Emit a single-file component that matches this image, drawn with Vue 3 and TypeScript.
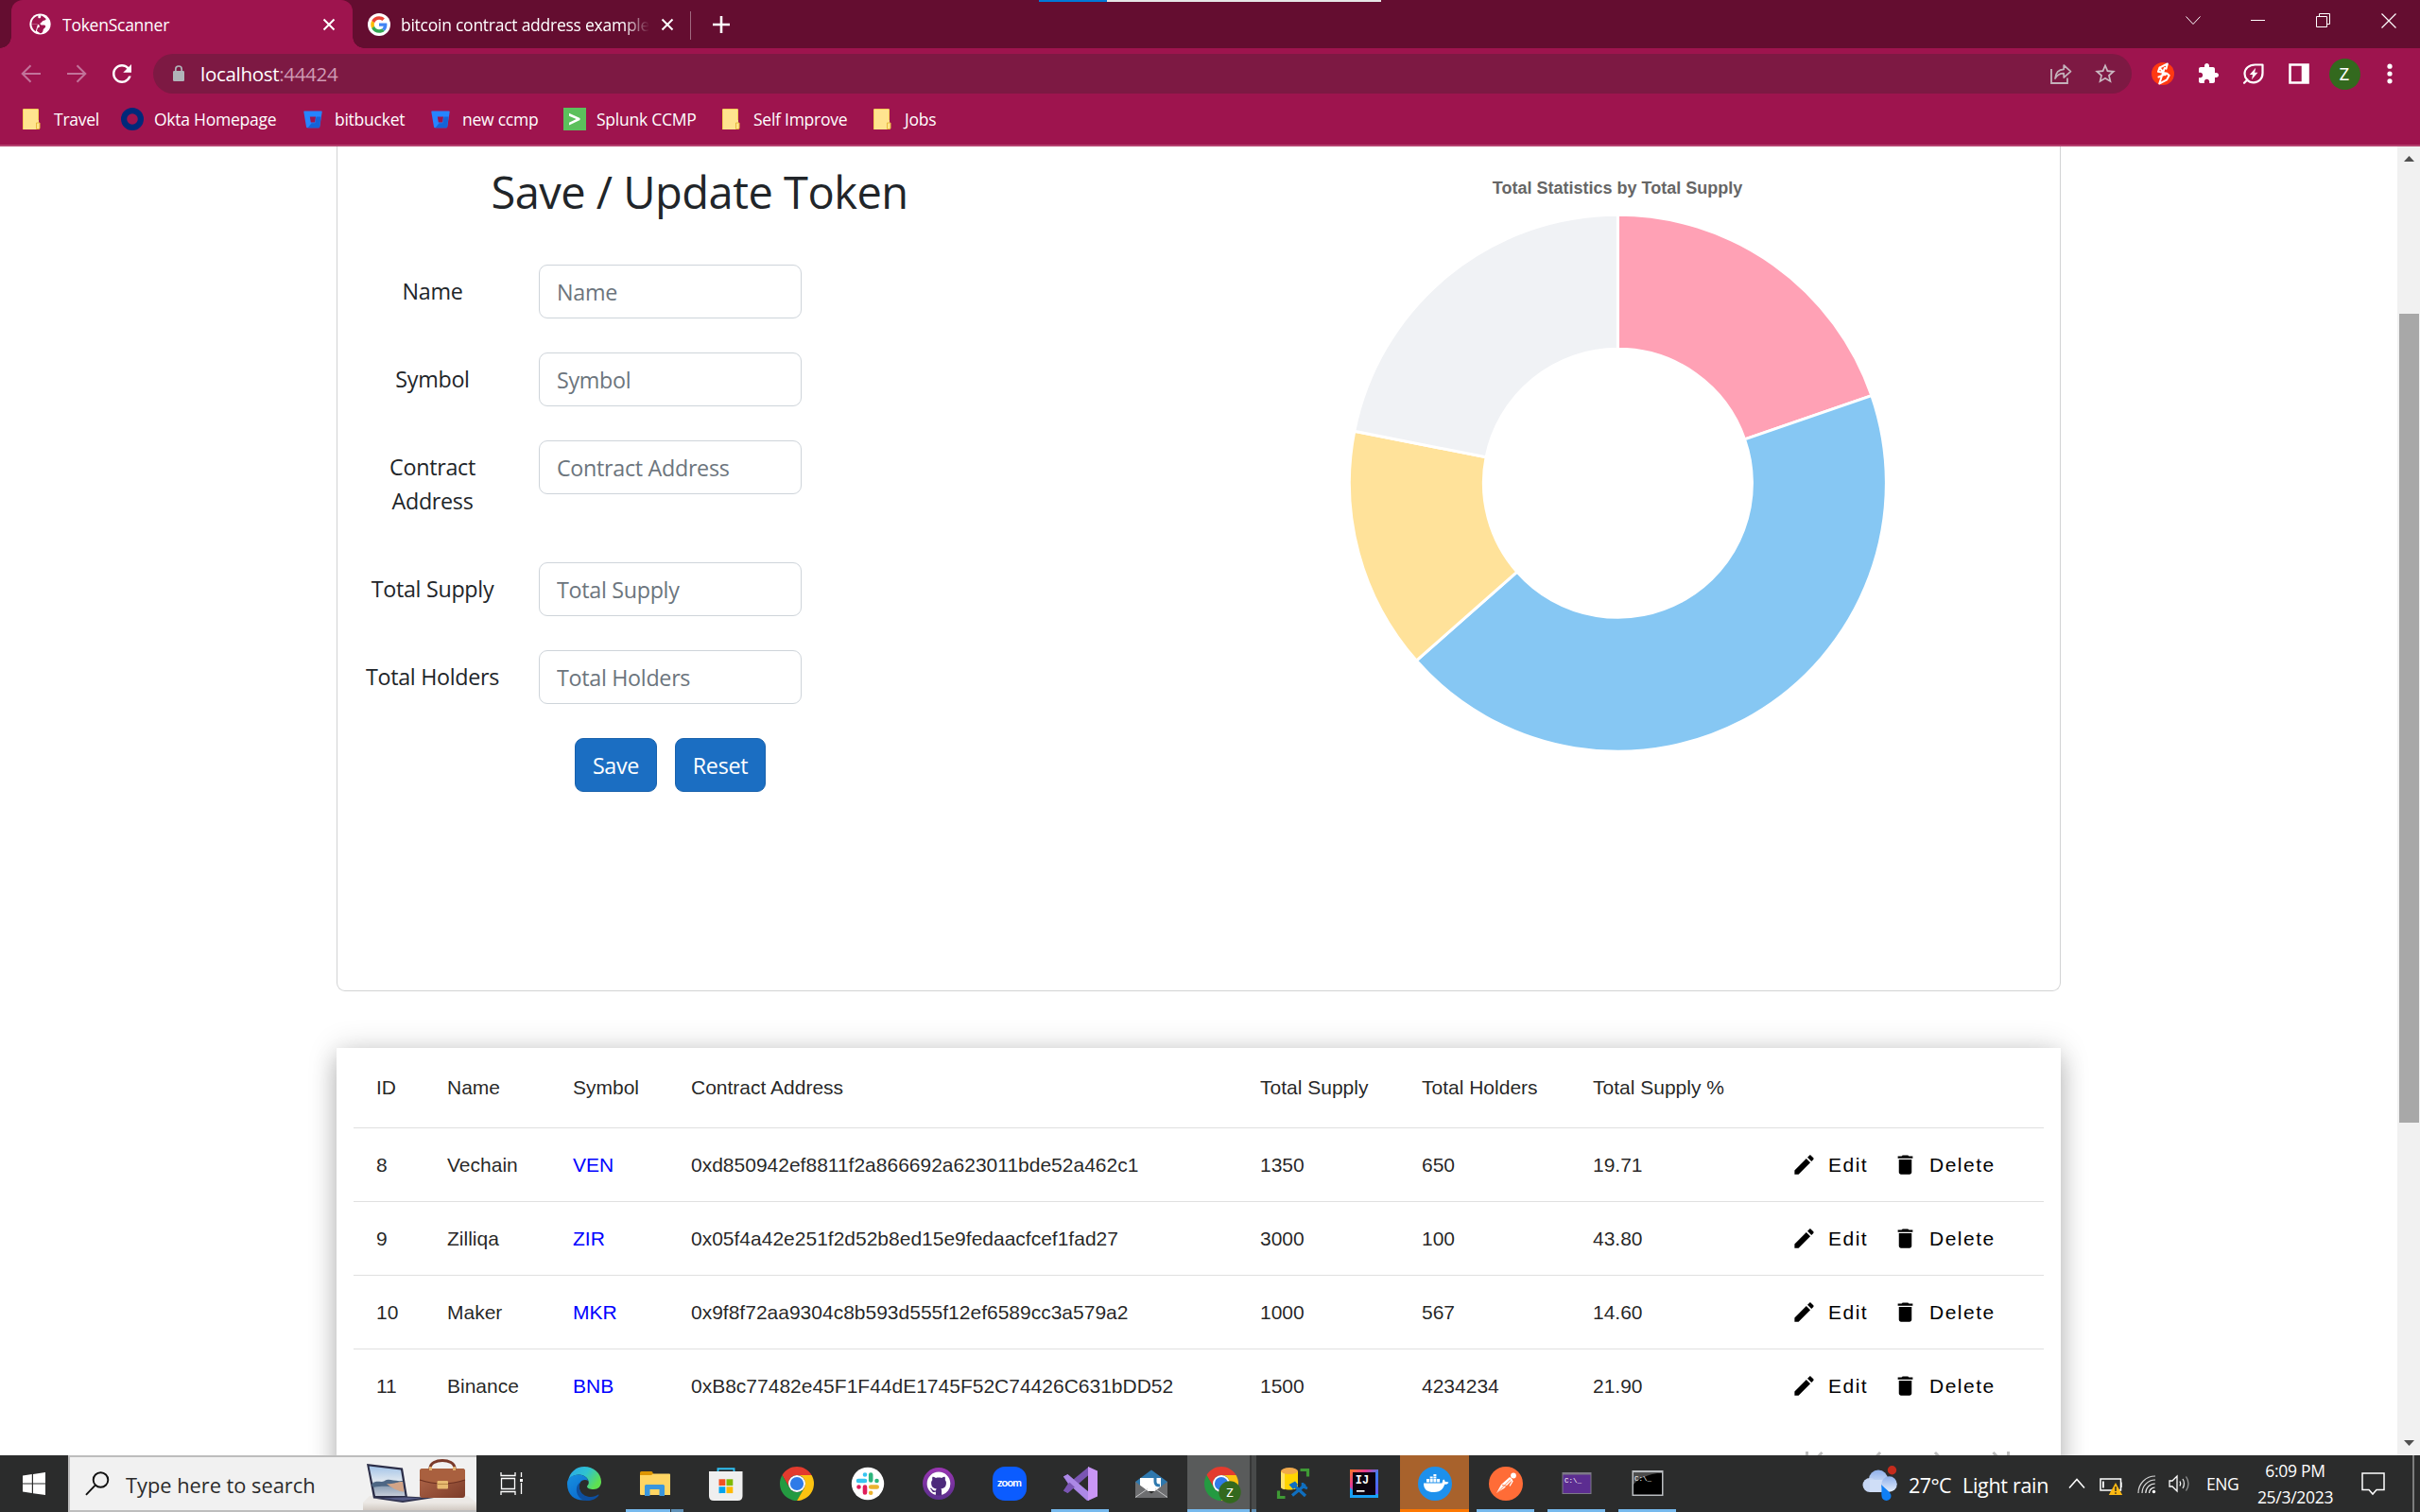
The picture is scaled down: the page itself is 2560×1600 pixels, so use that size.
<script setup lang="ts">
interface Token {
  id: number
  name: string
  symbol: string
  address: string
  supply: number
  holders: number
}

interface Field {
  label: string
  tall?: boolean
}

interface Bookmark {
  label: string
  icon: 'folder' | 'okta' | 'bucket' | 'splunk'
  width: number
}

const tokens: Token[] = [
  { id: 8, name: 'Vechain', symbol: 'VEN', address: '0xd850942ef8811f2a866692a623011bde52a462c1', supply: 1350, holders: 650 },
  { id: 9, name: 'Zilliqa', symbol: 'ZIR', address: '0x05f4a42e251f2d52b8ed15e9fedaacfcef1fad27', supply: 3000, holders: 100 },
  { id: 10, name: 'Maker', symbol: 'MKR', address: '0x9f8f72aa9304c8b593d555f12ef6589cc3a579a2', supply: 1000, holders: 567 },
  { id: 11, name: 'Binance', symbol: 'BNB', address: '0xB8c77482e45F1F44dE1745F52C74426C631bDD52', supply: 1500, holders: 4234234 },
]

const fields: Field[] = [
  { label: 'Name' },
  { label: 'Symbol' },
  { label: 'Contract Address', tall: true },
  { label: 'Total Supply' },
  { label: 'Total Holders' },
]

const headers = ['ID', 'Name', 'Symbol', 'Contract Address', 'Total Supply', 'Total Holders', 'Total Supply %', '']

const bookmarks: Bookmark[] = [
  { label: 'Travel', icon: 'folder', width: 104 },
  { label: 'Okta Homepage', icon: 'okta', width: 193 },
  { label: 'bitbucket', icon: 'bucket', width: 135 },
  { label: 'new ccmp', icon: 'bucket', width: 140 },
  { label: 'Splunk CCMP', icon: 'splunk', width: 168 },
  { label: 'Self Improve', icon: 'folder', width: 160 },
  { label: 'Jobs', icon: 'folder', width: 90 },
]

const total = tokens.reduce((sum, t) => sum + t.supply, 0)
const percents = ['19.71', '43.80', '14.60', '21.90']
const colors = ['#ffa1b5', '#86c7f3', '#ffe29a', '#f0f2f5']

const CX = 285.4
const CY = 285.3
const OUTER = 284
const INNER = 142

function point(radius: number, fraction: number): string {
  const a = fraction * Math.PI * 2 - Math.PI / 2
  return `${(CX + radius * Math.cos(a)).toFixed(2)} ${(CY + radius * Math.sin(a)).toFixed(2)}`
}

let cursor = 0
const slices = tokens.map((t, i) => {
  const from = cursor
  const to = cursor + t.supply / total
  cursor = to
  const d =
    `M${point(OUTER, from)}A${OUTER} ${OUTER} 0 0 1 ${point(OUTER, to)}` +
    `L${point(INNER, to)}A${INNER} ${INNER} 0 0 0 ${point(INNER, from)}Z`
  return { d, color: colors[i] }
})
</script>

<template>
  <div class="screen">
    <div class="progress"><span></span></div>

    <!-- tab strip -->
    <header class="tabs">
      <div class="tab active">
        <svg class="fav" viewBox="0 0 24 24">
          <circle cx="12" cy="12" r="11.6" fill="#fff" />
          <path d="M10 2.500C5.500 3.500 2.500 7.500 2.500 12h5.800c1.900 0 3 1 3 2.300 0 1.200-.8 1.700-2 1.700l-1 3.500 3.700 2.700c2 0 3.300-2 3.300-3.700 0-1 1-1.500 2-2.500 1.300-1.300.5-3-1-3h-3c-1.500 0-1.800-2-.5-2.500 1.600-.5 1.300-2.500 3.200-2.500 1.300 0 2-.6 2.500-1.700C16.500 4 14 2.700 12.500 2.500c1 1.500-.2 3-1.500 3-1.200 0-1.700-1.500-1-3z" fill="#9e144e" />
          <path d="M2.500 12h7l-2.500 8C4 18.500 2.500 15 2.500 12z" fill="#9e144e" />
        </svg>
        <span class="title t1">TokenScanner</span>
        <svg class="x" viewBox="0 0 14 14"><path d="M1.500 1.500l11 11M12.500 1.500l-11 11" stroke="#fff" stroke-width="2" /></svg>
      </div>
      <div class="tab second">
        <svg class="gfav" viewBox="0 0 48 48">
          <circle cx="24" cy="24" r="24" fill="#fff" />
          <g transform="translate(6.500 6.500) scale(.73)">
            <path fill="#EA4335" d="M24 9.500c3.540 0 6.710 1.220 9.210 3.600l6.850-6.850C35.900 2.380 30.470 0 24 0 14.620 0 6.510 5.380 2.560 13.220l7.980 6.190C12.430 13.720 17.740 9.500 24 9.500z" />
            <path fill="#4285F4" d="M46.980 24.550c0-1.570-.15-3.090-.38-4.550H24v9.020h12.940c-.58 2.960-2.260 5.480-4.780 7.180l7.730 6c4.510-4.180 7.090-10.360 7.090-17.650z" />
            <path fill="#FBBC05" d="M10.530 28.590c-.48-1.450-.76-2.990-.76-4.590s.27-3.140.76-4.590l-7.980-6.190C.92 16.460 0 20.120 0 24c0 3.880.92 7.540 2.560 10.780l7.970-6.190z" />
            <path fill="#34A853" d="M24 48c6.480 0 11.930-2.130 15.890-5.810l-7.730-6c-2.150 1.450-4.920 2.300-8.160 2.300-6.260 0-11.570-4.220-13.470-9.910l-7.980 6.190C6.510 42.620 14.620 48 24 48z" />
          </g>
        </svg>
        <span class="title t2">bitcoin contract address example</span>
        <svg class="x" viewBox="0 0 14 14"><path d="M1.500 1.500l11 11M12.500 1.500l-11 11" stroke="#fff" stroke-width="2" /></svg>
      </div>
      <i class="sep"></i>
      <svg class="plus" viewBox="0 0 18 18"><path d="M9 0v18M0 9h18" stroke="#fff" stroke-width="2.600" /></svg>
      <div class="winbtns">
        <span><svg width="16" height="16" viewBox="0 0 16 16"><path d="M.5 3.500L8 11.500l7.500-8" stroke="#fff" fill="none" /></svg></span>
        <span><svg width="16" height="16" viewBox="0 0 16 16"><path d="M0 7.500h15" stroke="#fff" /></svg></span>
        <span><svg width="16" height="16" viewBox="0 0 16 16"><path d="M.5 3.500h11v11H.5zM3.500 3.500v-3h11v11h-3" stroke="#fff" fill="none" /></svg></span>
        <span><svg width="16" height="16" viewBox="0 0 16 16"><path d="M.5 .5l15 15M15.500 .5l-15 15" stroke="#fff" stroke-width="1.200" /></svg></span>
      </div>
    </header>

    <!-- toolbar -->
    <div class="toolbar">
      <span class="cell dim"><svg width="22" height="20" viewBox="0 0 22 20"><path d="M21 10H2M10.500 1.200L1.700 10l8.800 8.800" fill="none" stroke="currentColor" stroke-width="2" /></svg></span>
      <span class="cell dim"><svg width="22" height="20" viewBox="0 0 22 20"><path d="M1 10h19M11.500 1.200l8.800 8.800-8.800 8.800" fill="none" stroke="currentColor" stroke-width="2" /></svg></span>
      <span class="cell"><svg width="30" height="30" viewBox="0 0 24 24"><path fill="#fff" d="M17.650 6.350C16.200 4.900 14.210 4 12 4c-4.420 0-7.990 3.580-7.990 8s3.570 8 7.990 8c3.730 0 6.840-2.550 7.730-6h-2.080c-.82 2.330-3.040 4-5.650 4-3.310 0-6-2.690-6-6s2.690-6 6-6c1.660 0 3.140.69 4.220 1.780L13 11h7V4l-2.350 2.350z" /></svg></span>
      <div class="address">
        <svg class="lock" width="14" height="18" viewBox="0 0 14 18"><rect x="1" y="6" width="12" height="11" rx="1.200" fill="#b0b4b9" /><path d="M3.800 7V4.200a3.200 3.200 0 0 1 6.400 0V7" fill="none" stroke="#b0b4b9" stroke-width="1.700" /></svg>
        <span class="url">localhost<em>:44424</em></span>
        <svg class="share" width="24" height="24" viewBox="0 0 24 24"><path d="M2 7v15h17v-5.500" fill="none" stroke="#c3b1ba" stroke-width="1.800" /><path d="M6 17c.6-6 4-9.400 9.200-9.600V3l7.300 6.600-7.300 6.400v-4.300C11 11.600 8.200 13.300 6 17z" fill="none" stroke="#c3b1ba" stroke-width="1.700" stroke-linejoin="round" /></svg>
        <svg class="star" width="26" height="26" viewBox="0 0 24 24"><path fill="#c9b8c0" d="M22 9.240l-7.190-.62L12 2 9.190 8.630 2 9.240l5.460 4.730L5.820 21 12 17.270 18.180 21l-1.630-7.030L22 9.240zM12 15.400l-3.760 2.270 1-4.280-3.320-2.880 4.380-.38L12 6.100l1.710 4.040 4.380.38-3.320 2.880 1 4.280L12 15.400z" /></svg>
      </div>
      <span class="cell"><svg width="24" height="24" viewBox="0 0 24 24"><circle cx="12" cy="12" r="12" fill="#ff3912" /><path d="M16.800 1.500L8.500 5.600 7 9.800l9.500 2M16.800 1.500l-1.300 5.200M16.500 11.800L7.500 15.500M13.800 6L8.200 22.500l8-4.200 2.500-4.500-2.500-2M8.500 5.600l6 7.500" stroke="#fff" stroke-width="2" fill="none" stroke-linejoin="round" stroke-linecap="round" /></svg></span>
      <span class="cell"><svg width="24" height="24" viewBox="0 0 24 24"><path fill="#fff" d="M20.500 11H19V7c0-1.100-.9-2-2-2h-4V3.500C13 2.120 11.880 1 10.500 1S8 2.120 8 3.500V5H4c-1.100 0-1.990.9-1.990 2v3.800H3.500c1.490 0 2.700 1.210 2.700 2.700s-1.210 2.700-2.700 2.700H2V20c0 1.100.9 2 2 2h3.800v-1.500c0-1.490 1.210-2.700 2.700-2.700 1.490 0 2.700 1.210 2.700 2.700V22H17c1.100 0 2-.9 2-2v-4h1.500c1.380 0 2.500-1.120 2.500-2.500S21.880 11 20.500 11z" /></svg></span>
      <span class="cell"><svg width="24" height="24" viewBox="0 0 24 24"><path d="M21.500 2.500h-8C7 2.500 2.500 6.800 2.500 12c0 2.500 1 4.700 2.600 6.400A9.500 9.500 0 0 0 12 21.300c5.500 0 9.500-4 9.500-10zM5.500 18.200L2 21.800" fill="none" stroke="#fff" stroke-width="2.200" stroke-linejoin="round" stroke-linecap="round" /><path d="M14.200 5.800L7.800 13h3.200l-1 5.200 6.400-7.400h-3.300z" fill="#fff" /></svg></span>
      <span class="cell"><svg width="22" height="22" viewBox="0 0 22 22"><path d="M1.500 1.500h19v19h-19z" fill="none" stroke="#fff" stroke-width="2.600" /><path d="M13.700 1h7v20h-7z" fill="#fff" /></svg></span>
      <span class="cell"><b class="avatar">Z</b></span>
      <span class="cell"><svg width="6" height="22" viewBox="0 0 6 22"><g fill="#fff"><circle cx="3" cy="3.200" r="2.600" /><circle cx="3" cy="11" r="2.600" /><circle cx="3" cy="18.800" r="2.600" /></g></svg></span>
    </div>

    <!-- bookmarks -->
    <nav class="bookmarks">
      <span v-for="(b, i) in bookmarks" :key="i" class="bm" :style="{ width: b.width + 'px' }">
        <svg v-if="b.icon === 'folder'" width="20" height="24" viewBox="0 0 20 24"><path d="M0 2.500Q0 1 1.500 1h14Q17 1 17 2.500V23H1.500Q0 23 0 21.500z" fill="#ffe48f" /><path d="M.5 23V2.500Q.5 1.500 1.500 1.500h14q1 0 1 1V13" fill="none" stroke="#f5cf55" /><path d="M14.500 22.500V16h3.500v5.500q0 1-1 1z" fill="#ffe48f" stroke="#e6b93c" /></svg>
        <svg v-else-if="b.icon === 'okta'" width="24" height="24" viewBox="0 0 24 24"><circle cx="12" cy="12" r="8.900" fill="none" stroke="#00297a" stroke-width="6.200" /></svg>
        <svg v-else-if="b.icon === 'bucket'" width="20" height="24" viewBox="0 0 20 24"><path d="M1 3.500h18q.8 0 .7.8l-2.500 16q-.1.900-1 .900H4q-.9 0-1-.9L.3 4.300q-.1-.8.7-.8z" fill="#2684ff" /><path d="M13.500 9.500h5l-1.300 10.800q-.1.900-1 .9H4.600l4-5h3.700z" fill="#1463d8" /><path d="M6.800 9.500h6.200l-.9 6H7.800z" fill="#9e144e" /></svg>
        <svg v-else width="24" height="24" viewBox="0 0 24 24"><path d="M0 0h24v24H0z" fill="#5cc05c" /><path d="M6 5.800l11.500 5.200v2L6 18.600v-2.900l7.600-3.600L6 8.700z" fill="#fff" /></svg>
        <span :class="'bl ' + b.icon">{{ b.label }}</span>
      </span>
    </nav>

    <!-- page -->
    <main class="viewport">
      <div class="page">
        <section class="card">
          <form class="form" @submit.prevent>
            <h2>Save / Update Token</h2>
            <div v-for="f in fields" :key="f.label" class="row" :class="{ tall: f.tall }">
              <label>{{ f.label }}</label>
              <input type="text" :placeholder="f.label" />
            </div>
            <div class="actions">
              <button type="submit" class="save">Save</button>
              <button type="reset" class="reset">Reset</button>
            </div>
          </form>
          <div class="chart">
            <div class="chart-title">Total Statistics by Total Supply</div>
            <svg width="571" height="571" viewBox="0 0 571 571">
              <path v-for="(s, i) in slices" :key="i" :d="s.d" :fill="s.color" stroke="#fff" stroke-width="3" />
            </svg>
          </div>
        </section>

        <section class="list">
          <div class="tr head">
            <span v-for="h in headers" :key="h">{{ h }}</span>
          </div>
          <div v-for="(t, i) in tokens" :key="t.id" class="tr">
            <span>{{ t.id }}</span>
            <span>{{ t.name }}</span>
            <span><a>{{ t.symbol }}</a></span>
            <span>{{ t.address }}</span>
            <span>{{ t.supply }}</span>
            <span>{{ t.holders }}</span>
            <span>{{ percents[i] }}</span>
            <span class="ops">
              <svg viewBox="0 0 24 24"><path d="M3 17.250V21h3.750L17.810 9.940l-3.750-3.750L3 17.250zM20.710 7.040c.39-.39.39-1.020 0-1.410l-2.340-2.340c-.39-.39-1.020-.39-1.410 0l-1.830 1.830 3.750 3.750 1.830-1.830z" /></svg>
              <b class="edit">Edit</b>
              <svg viewBox="0 0 24 24"><path d="M6 19c0 1.100.9 2 2 2h8c1.100 0 2-.9 2-2V7H6v12zM19 4h-3.500l-1-1h-5l-1 1H5v2h14V4z" /></svg>
              <b>Delete</b>
            </span>
          </div>
          <div class="pager">
            <svg viewBox="0 0 24 24"><path d="M18.410 16.590L13.820 12l4.590-4.590L17 6l-6 6 6 6zM6 6h2v12H6z" /></svg>
            <svg viewBox="0 0 24 24"><path d="M15.410 7.410L14 6l-6 6 6 6 1.410-1.410L10.830 12z" /></svg>
            <svg viewBox="0 0 24 24"><path d="M10 6L8.590 7.410 13.170 12l-4.580 4.590L10 18l6-6z" /></svg>
            <svg viewBox="0 0 24 24"><path d="M5.590 7.410L10.180 12l-4.590 4.590L7 18l6-6-6-6zM16 6h2v12h-2z" /></svg>
          </div>
        </section>
      </div>
      <div class="scrollbar">
        <svg width="11" height="6" viewBox="0 0 11 6"><path d="M5.500 0L11 6H0z" fill="#505050" /></svg>
        <i class="thumb"></i>
        <svg width="11" height="6" viewBox="0 0 11 6"><path d="M5.500 6L11 0H0z" fill="#505050" /></svg>
      </div>
    </main>

    <!-- taskbar -->
    <footer class="taskbar">
      <span class="start"><svg width="24" height="24" viewBox="0 0 24 24"><path d="M0 3.400l9.800-1.300v9.300H0zM11 1.900L24 0v11.400H11zM0 12.600h9.800v9.300L0 20.600zM11 12.600h13V24l-13-1.800z" fill="#fff" /></svg></span>
      <div class="search">
        <svg class="glass" width="26" height="26" viewBox="0 0 26 26"><circle cx="16.500" cy="9" r="7.800" fill="none" stroke="#111" stroke-width="1.900" /><path d="M10.800 14.700L1 24.800" stroke="#111" stroke-width="1.900" /></svg>
        <span class="stext">Type here to search</span>
        <svg class="art" width="120" height="56" viewBox="0 0 120 56">
          <defs>
            <linearGradient id="desk" x2="0" y2="1"><stop offset="0" stop-color="#ece9e5" /><stop offset="1" stop-color="#d2cac3" /></linearGradient>
            <linearGradient id="sky" x2="0" y2="1"><stop offset="0" stop-color="#a3c4e8" /><stop offset=".5" stop-color="#dfe7ef" /><stop offset=".6" stop-color="#7f96ae" /><stop offset="1" stop-color="#c6ccd8" /></linearGradient>
            <linearGradient id="bag" x2="1" y2="1"><stop offset="0" stop-color="#b46a4c" /><stop offset="1" stop-color="#7d3c29" /></linearGradient>
          </defs>
          <path d="M0 48l7-7h104l9 7z" fill="#ece9e6" />
          <path d="M0 48h120v8H0z" fill="url(#desk)" />
          <path d="M4 7l38 4.500 5 31-36 1z" fill="#2b2d47" />
          <path d="M6.500 9.500l33.500 4 4.500 27.500L13 41z" fill="url(#sky)" />
          <path d="M9 29c6-6 9-1 14-4s9 1 19 0l.8 6c-12 2-16-2-32 1z" fill="#4e6784" />
          <path d="M25 28c4 4 14 9 18.500 8.500L42 26c-7 0-9 3-17 2z" fill="#d2a487" />
          <path d="M11 43.500l35-2 29 1.500-33 5z" fill="#30334f" />
          <path d="M20 43.600l24-1 18 .7-20 2.700z" fill="#555b86" />
          <path d="M71 12C71 .5 97 .5 97 12" fill="none" stroke="#7a3a2a" stroke-width="3" />
          <rect x="60" y="12" width="48" height="31" rx="3" fill="url(#bag)" />
          <path d="M60 15q0-3 3-3h42q3 0 3 3v9q-24 8-48 0z" fill="#a9603f" />
          <path d="M60 24q24 8 48 0" fill="none" stroke="#6b3020" stroke-width="1.200" />
          <rect x="78.500" y="25" width="11.500" height="8.500" rx="1" fill="#e8ba70" />
          <path d="M78.500 28.500h11.500" stroke="#b88746" />
          <path d="M70 10h3v4h-3zM95 10h3v4h-3z" fill="#e2b071" />
        </svg>
      </div>
      <span class="taskview"><svg width="24" height="24" viewBox="0 0 24 24"><path d="M1 0v3.500h15V0M1 24v-3.500h15V24M1.500 6.500h14v11H1.500zM22.500 0v5M22.500 11v12" fill="none" stroke="#fff" stroke-width="1.300" /><path d="M21 7h3v3h-3z" fill="#fff" /></svg></span>

      <span class="slot"><svg viewBox="0 0 36 36">
        <defs>
          <linearGradient id="e1" x2="1" y2=".5"><stop offset="0" stop-color="#2aa5ea" /><stop offset=".55" stop-color="#2fc3d0" /><stop offset="1" stop-color="#5fe04f" /></linearGradient>
          <linearGradient id="e2" x2=".6" y2="1"><stop offset="0" stop-color="#1790df" /><stop offset="1" stop-color="#0b6cd0" /></linearGradient>
        </defs>
        <path d="M1 15C2.500 6 9.500 0 18 0c10 0 18 7 18 16 0 5-3.500 8-8 8-4 0-7-1.300-7-3 0-.9 1.800-1.500 1.800-4 0-4-4-8.500-10.300-8.500C6.500 8.500 2.500 11.500 1 15z" fill="url(#e1)" />
        <path d="M0 18C0 12 5.500 8.500 12 8.500c5 0 9 2.700 10.300 6.200C15 12 11.500 18 13 24c1.300 5.500 6 9.500 11 9.500C16 38.500 0 35 0 18z" fill="url(#e2)" />
        <path d="M14 16.500c-3.500 6 1 15.500 11 15.500 3 0 6-1.200 7.500-2.300.8-.5 1.300 0 .8.800C30 35 24.500 36.500 20 36 9 34.500 7 20.500 14 16.500z" fill="#0d4fa0" />
      </svg></span>
      <span class="slot"><svg viewBox="0 0 36 36">
        <path d="M2 8V6.500Q2 5 3.500 5H14q1.500 0 1.500 1.500L17 9H2z" fill="#dd9500" />
        <path d="M2 9h12l2-1.500h17q1 0 1 1V30H3q-1 0-1-1z" fill="#ffd563" />
        <path d="M7 31V20.500Q7 19 8.500 19h18q1.500 0 1.500 1.500V31h-5.500v-7h-10v7z" fill="#3a96dd" />
      </svg></span>
      <span class="slot"><svg viewBox="0 0 36 36">
        <path d="M9.500 7V2.200h17V7" fill="none" stroke="#2fc0f2" stroke-width="1.900" />
        <path d="M0 5h35.500v26q0 5-5 5H5q-5 0-5-5z" fill="#efefef" />
        <path d="M10.500 13.300h6.800v6.800h-6.800z" fill="#f25022" /><path d="M18.500 13.300h6.800v6.800h-6.800z" fill="#7fba00" /><path d="M10.500 21.300h6.800v6.800h-6.800z" fill="#00a4ef" /><path d="M18.500 21.300h6.800v6.800h-6.800z" fill="#ffb900" />
      </svg></span>
      <span class="slot"><svg viewBox="2 2 44 44">
        <path d="M24 13H43.050A22 22 0 0 0 4.950 13L14.470 29.500A11 11 0 0 1 24 13z" fill="#e33b2e" />
        <path d="M14.470 29.500L4.950 13A22 22 0 0 0 24 46l9.530-16.500A11 11 0 0 1 14.470 29.500z" fill="#249a41" />
        <path d="M43.050 13H24a11 11 0 0 1 9.530 16.500L24 46A22 22 0 0 0 43.050 13z" fill="#fcc310" />
        <circle cx="24" cy="24" r="11" fill="#fff" /><circle cx="24" cy="24" r="8.700" fill="#2f7be8" />
      </svg></span>
      <span class="slot"><svg viewBox="0 0 36 36">
        <circle cx="18" cy="18" r="17.200" fill="#fff" />
        <g stroke-width="4.600" stroke-linecap="round" fill="none">
          <path d="M15 8.500v0M15 15H8" stroke="#36c5f0" /><path d="M21.200 8.500v6" stroke="#2eb67d" /><path d="M27.500 15h0" stroke="#2eb67d" />
          <path d="M21.200 21.500h6.500M21.200 27.800v0" stroke="#ecb22e" /><path d="M15 21.500v6M8.500 21.500h0" stroke="#e01e5a" />
        </g>
      </svg></span>
      <span class="slot"><svg viewBox="0 0 36 36">
        <defs><linearGradient id="gh" x2="0" y2="1"><stop offset="0" stop-color="#9b35b3" /><stop offset="1" stop-color="#5a2f8d" /></linearGradient></defs>
        <circle cx="18" cy="18" r="17" fill="url(#gh)" />
        <circle cx="18" cy="18" r="12.400" fill="#4d2a7b" />
        <path transform="translate(5.600 5.600) scale(1.550)" fill="#fff" d="M8 0C3.580 0 0 3.580 0 8c0 3.540 2.290 6.530 5.470 7.590.4.070.55-.17.55-.38 0-.19-.01-.82-.01-1.490-2.010.37-2.530-.49-2.690-.94-.09-.23-.48-.94-.82-1.130-.28-.15-.68-.52-.01-.53.63-.01 1.080.58 1.230.82.72 1.210 1.870.87 2.330.66.07-.52.28-.87.51-1.070-1.780-.2-3.640-.89-3.640-3.950 0-.87.31-1.590.82-2.150-.08-.2-.36-1.020.08-2.120 0 0 .67-.21 2.200.82.64-.18 1.320-.27 2-.27s1.360.09 2 .27c1.530-1.040 2.200-.82 2.200-.82.44 1.100.16 1.920.08 2.120.51.56.82 1.270.82 2.150 0 3.070-1.870 3.750-3.650 3.950.29.25.54.73.54 1.480 0 1.070-.01 1.930-.01 2.200 0 .21.15.46.55.38A8.010 8.010 0 0 0 16 8c0-4.420-3.580-8-8-8z" />
      </svg></span>
      <span class="slot"><svg viewBox="0 0 36 36">
        <rect x="0" y="0" width="36" height="36" rx="13" fill="#0b5cff" />
        <text x="18" y="21.300" text-anchor="middle" font-family="Lato, sans-serif" font-weight="700" font-size="11.500" textLength="26" fill="#fff">zoom</text>
      </svg></span>
      <span class="slot vs"><svg viewBox="0 0 36 36">
        <path d="M0 10.500L4.500 8l5 4.500v11l-5 4.500L0 25.500l5-7.500z" fill="#7450a8" />
        <path d="M0 10.500l4.500-2.300L27 28.500v7.300L25 36 5 18z" fill="#a986e4" />
        <path d="M0 25.500L4.500 28 27 8.500V0L5 18z" fill="#7a55b3" />
        <path d="M0 10.500l4.500-2.300L27 27v9z" fill="#ac88e6" />
        <path d="M26 0l10 4.500v27L26 36z" fill="#c996f5" />
      </svg></span>
      <span class="slot"><svg viewBox="0 0 36 36">
        <path d="M1 16L18 3.500 35 16v5H1z" fill="#2e78ae" />
        <path d="M6 12h22v14H6z" fill="#fff" />
        <path d="M22 12v4q0 4 5 4" fill="none" stroke="#2e78ae" stroke-width="3" />
        <path d="M1 16l17 12.500L35 16v17H1z" fill="#6d6e70" />
        <path d="M1 32.500l13-9M35 32.500l-13-9" stroke="#c3c4c6" stroke-width="1" />
      </svg></span>
      <span class="slot chrome"><svg viewBox="2 2 44 44">
        <path d="M24 13H43.050A22 22 0 0 0 4.950 13L14.470 29.500A11 11 0 0 1 24 13z" fill="#e33b2e" />
        <path d="M14.470 29.500L4.950 13A22 22 0 0 0 24 46l9.530-16.500A11 11 0 0 1 14.470 29.500z" fill="#249a41" />
        <path d="M43.050 13H24a11 11 0 0 1 9.530 16.500L24 46A22 22 0 0 0 43.050 13z" fill="#fcc310" />
        <circle cx="24" cy="24" r="11" fill="#fff" /><circle cx="24" cy="24" r="8.700" fill="#2f7be8" />
        <circle cx="35" cy="35" r="14.300" fill="#33691e" />
        <text x="35" y="41" text-anchor="middle" font-family="Roboto, sans-serif" font-size="15.500" fill="#fff">Z</text>
      </svg></span>
      <span class="slot"><svg viewBox="0 0 36 36">
        <path d="M5 5v16.500c0 4 18 4 18 0V5z" fill="#ffd400" /><path d="M5 6v15.500c0 1.500 2 2.300 4 2.700V6z" fill="#ffe36a" />
        <ellipse cx="14" cy="4.600" rx="9" ry="3.500" fill="#f0a94c" />
        <path d="M25.500 3.500h8v7M9.500 32.500h-7v-7" fill="none" stroke="#3f9a35" stroke-width="3.200" />
        <path d="M17 30.500L31 19M17.500 18.500L31 31" stroke="#0f6fc0" stroke-width="3.200" />
        <path d="M13.500 19l6.500-3.500 3 3.500-5 5z" fill="#0f6fc0" /><path d="M28 17v4l5 2" stroke="#0f6fc0" stroke-width="2.600" fill="none" />
      </svg></span>
      <span class="slot"><svg viewBox="0 0 36 36">
        <defs><linearGradient id="ij" x2="1" y2="1"><stop offset="0" stop-color="#fc7a1e" /><stop offset=".3" stop-color="#e6378f" /><stop offset=".55" stop-color="#3a7df0" /><stop offset="1" stop-color="#6b4df5" /></linearGradient></defs>
        <path d="M3 3h30v30H3z" fill="url(#ij)" /><path d="M3 22l7 7h23v4H3z" fill="#17a0f5" /><path d="M6 6h24v24H6z" fill="#0c0210" />
        <text x="8.800" y="18" font-family="Liberation Mono, monospace" font-weight="700" font-size="12" fill="#fff">IJ</text>
        <path d="M10 25h8.500v1.700H10z" fill="#fff" />
      </svg></span>
      <span class="slot docker"><svg viewBox="0 0 36 36">
        <circle cx="18" cy="18" r="18" fill="#1d90ec" />
        <path d="M6 17.500h19.500c.6-1.600.4-3 1.600-4 1.200.8 1.500 1.600 1.600 2.600 1.500-.3 3 0 3.800.6-.9 1.700-2.500 2-4.300 2C26.500 25 22 27 17 27c-7 0-11-2.500-11-9.500z" fill="#fff" />
        <path d="M9 13h3v3.500H9zM12.700 13h3v3.500h-3zM16.400 13h3v3.500h-3zM20.100 13h3v3.500h-3zM12.700 10.500h3v2h-3zM16.400 10.500h3v2h-3zM16.400 8h3v2h-3z" fill="#fff" />
      </svg></span>
      <span class="slot run"><svg viewBox="0 0 36 36">
        <circle cx="18" cy="18" r="18" fill="#ff6c37" />
        <path d="M8 28l5-9 9-8 3 3-9 9z" fill="#fff" /><circle cx="26" cy="9.500" r="2.900" fill="#fff" /><path d="M9 27.500L24 12.500M14 19.500l5 1" stroke="#ff6c37" stroke-width=".9" /><path d="M22.500 12l2.500 3.500-3 5" fill="none" stroke="#fff" stroke-width="1.300" />
      </svg></span>
      <span class="slot run"><svg viewBox="0 0 36 36">
        <path d="M2.500 6h31v23h-31z" fill="#7d7a86" /><path d="M3.500 8.500h29V28h-29z" fill="#5c2d91" />
        <text x="5" y="17" font-family="Liberation Mono, monospace" font-size="7.500" fill="#fff">C:\_</text>
      </svg></span>
      <span class="slot run"><svg viewBox="0 0 36 36">
        <path d="M1.500 4h33v27h-33z" fill="#b9bcc0" /><path d="M3 6.500h30V29.500H3z" fill="#000" /><path d="M3 6.500h28C20 8 8 12 3 19z" fill="#4c4c4c" />
        <text x="4" y="14.500" font-family="Liberation Mono, monospace" font-size="7.500" fill="#fff">C:\_</text>
      </svg></span>

      <div class="tray">
        <svg class="weather" width="38" height="38" viewBox="0 0 38 38">
          <defs><linearGradient id="cl" x2="0" y2="1"><stop offset="0" stop-color="#8fb0ea" /><stop offset="1" stop-color="#e3edfb" /></linearGradient></defs>
          <circle cx="17" cy="14.500" r="10" fill="url(#cl)" /><circle cx="8" cy="20.500" r="7.500" fill="#c5d6f4" /><path d="M8 15h20v13H8z" fill="#cfdef7" /><circle cx="28.500" cy="19.500" r="8.300" fill="url(#cl)" />
          <path d="M20 20c1 6 0 8 .5 12a5 5 0 0 0 10 0C30.500 28 25 25 20 20z" fill="#0f7ff5" />
          <circle cx="31.500" cy="4.800" r="4.700" fill="#c42b1c" />
        </svg>
        <span class="temp">27°C</span>
        <span class="cond">Light rain</span>
        <svg class="chev" width="18" height="12" viewBox="0 0 18 12"><path d="M1 10.500L9 1.500l8 9" fill="none" stroke="#fff" stroke-width="1.500" /></svg>
        <svg class="batt" width="25" height="20" viewBox="0 0 25 20"><path d="M1 2h21.500v12H1zM23 5.500V11" fill="none" stroke="#fff" stroke-width="1.500" /><path d="M3 4.500h1.800v7H3z" fill="#fff" /><path d="M17 6l7.200 13H9.800z" fill="#fdb913" /><path d="M17 10v5M17 16.300v1.400" stroke="#222" stroke-width="1.400" /></svg>
        <svg class="wifi" width="20" height="20" viewBox="0 0 20 20"><g fill="none" stroke="#fff" stroke-width="1.200"><path d="M12.500 19a6 6 0 0 1 6-6" /><path d="M8.800 19a10 10 0 0 1 10-10" opacity=".9" /><path d="M5 19A14 14 0 0 1 19 5" opacity=".85" /><path d="M1 19A18 18 0 0 1 19 1" opacity=".8" /></g><circle cx="17.500" cy="17.500" r="1.700" fill="#fff" /></svg>
        <svg class="vol" width="24" height="20" viewBox="0 0 24 20"><g fill="none" stroke="#fff" stroke-width="1.300"><path d="M1 7h3l5-5v16l-5-5H1z" /><path d="M12 7.500q1.500 2.500 0 5" /><path d="M15 5q3 5 0 10" opacity=".85" /><path d="M18.500 2.500q5 7.500 0 15" opacity=".5" /></g></svg>
        <span class="eng">ENG</span>
        <span class="clock"><span class="time">6:09 PM</span><span class="date">25/3/2023</span></span>
        <svg class="note" width="25" height="25" viewBox="0 0 25 25"><path d="M1 1h23v17.500h-8l-4 4.500-4-4.500H1z" fill="none" stroke="#fff" stroke-width="1.500" /></svg>
        <i class="peek"></i>
      </div>
    </footer>
  </div>
</template>

<style>
html,
body {
  margin: 0;
  overflow: hidden;
}
</style>

<style scoped>
.screen {
  position: relative;
  display: flex;
  flex-direction: column;
  width: 2560px;
  height: 1600px;
  overflow: hidden;
  background: #fff;
  font-family: 'Open Sans', 'Noto Sans', sans-serif;
}
svg {
  display: block;
  flex: none;
}
.screen span {
  white-space: nowrap;
}
.progress {
  position: absolute;
  top: 0;
  left: 1099px;
  width: 362px;
  height: 2px;
  background: #e6e6e6;
}
.progress span {
  display: block;
  width: 72px;
  height: 2px;
  background: #0078d7;
}

/* tab strip */
.tabs {
  display: flex;
  align-items: center;
  height: 51px;
  flex: none;
  padding-left: 12px;
  background: #640d30;
  color: #fff;
}
.tab {
  display: flex;
  align-items: center;
  height: 51px;
  box-sizing: border-box;
}
.tab.active {
  position: relative;
  width: 361px;
  padding-left: 19px;
  border-radius: 12px 12px 0 0;
  background: #9e144e;
}
.tab.active::before,
.tab.active::after {
  content: '';
  position: absolute;
  bottom: 0;
  width: 12px;
  height: 12px;
}
.tab.active::before {
  left: -12px;
  background: radial-gradient(circle at 0 0, transparent 11.5px, #9e144e 12px);
}
.tab.active::after {
  right: -12px;
  background: radial-gradient(circle at 100% 0, transparent 11.5px, #9e144e 12px);
}
.fav {
  width: 23px;
  height: 23px;
}
.gfav {
  width: 24px;
  height: 24px;
}
.title {
  font-size: 17.5px;
  line-height: 24px;
  overflow: hidden;
}
.t1 {
  width: 275px;
  margin-left: 12px;
  letter-spacing: -0.25px;
}
.tab.second {
  width: 357px;
  padding-left: 16px;
}
.t2 {
  width: 263px;
  margin-left: 11px;
  letter-spacing: -0.25px;
  -webkit-mask-image: linear-gradient(90deg, #000 236px, transparent 263px);
  mask-image: linear-gradient(90deg, #000 236px, transparent 263px);
}
.x {
  width: 14px;
  height: 14px;
}
.t2 + .x {
  margin-left: 12px;
}
.sep {
  width: 1px;
  height: 30px;
  margin-top: 2px;
  background: #a06a80;
}
.plus {
  width: 18px;
  height: 18px;
  margin-left: 23px;
}
.winbtns {
  display: flex;
  margin-left: auto;
  margin-right: -1px;
}
.winbtns span {
  display: flex;
  justify-content: center;
  width: 69px;
  margin-top: -8px;
}

/* toolbar */
.toolbar {
  display: flex;
  align-items: center;
  flex: none;
  height: 54px;
  padding: 0 8px 0 9px;
  background: #9e144e;
}
.cell {
  display: flex;
  align-items: center;
  justify-content: center;
  width: 48px;
  height: 54px;
}
.dim {
  color: #c2739a;
}
.address {
  display: flex;
  align-items: center;
  flex: 1;
  height: 42px;
  margin: 0 9px;
  border-radius: 21px;
  background: #7d1943;
}
.lock {
  margin-left: 20px;
}
.url {
  margin-left: 16px;
  font-size: 20.5px;
  letter-spacing: -0.3px;
  color: #fff;
}
.url em {
  font-style: normal;
  color: #d09bb3;
}
.share {
  margin-left: auto;
}
.star {
  margin: 0 15px 0 22px;
}
.avatar {
  width: 33px;
  height: 33px;
  border-radius: 50%;
  background: #33691e;
  color: #fff;
  font: 400 18px/34px Roboto, sans-serif;
  text-align: center;
}

/* bookmarks */
.bookmarks {
  display: flex;
  flex: none;
  height: 48px;
  padding-left: 24px;
  box-sizing: border-box;
  background: #9e144e;
}
.bm {
  display: flex;
  align-items: center;
  height: 42px;
  color: #fff;
  font-size: 17.5px;
}
.bl {
  margin-left: 11px;
  letter-spacing: -0.25px;
}
.bl.folder,
.bl.bucket {
  margin-left: 13px;
}

/* page */
.viewport {
  display: flex;
  flex: none;
  height: 1387px;
  box-sizing: border-box;
  border-top: 2px solid #b5426f;
}
.page {
  flex: 1;
  padding-left: 356px;
  overflow: hidden;
}
.card {
  display: flex;
  justify-content: space-between;
  width: 1824px;
  height: 894px;
  box-sizing: border-box;
  border: 1px solid #d2d3d4;
  border-top: 0;
  border-radius: 0 0 9px 9px;
}
.form {
  width: 766px;
  padding-top: 19px;
  color: #212529;
}
h2 {
  margin: 0 0 48px;
  height: 58px;
  font-size: 47px;
  font-weight: 500;
  line-height: 58px;
  letter-spacing: -0.5px;
  text-align: center;
}
.row {
  display: flex;
  height: 57px;
  margin-bottom: 36px;
}
.row.tall {
  height: 93px;
}
label {
  width: 125px;
  margin: 10px 50px 0 38px;
  font-size: 23.3px;
  line-height: 36px;
  letter-spacing: -0.3px;
  text-align: center;
}
.row:not(.tall) label {
  white-space: nowrap;
  width: 165px;
  margin: 10px 30px 0 18px;
}
input {
  width: 278px;
  height: 57px;
  box-sizing: border-box;
  padding: 0 18px;
  border: 1px solid #ced4da;
  border-radius: 9px;
  outline: 0;
  background: #fff;
  font: 400 23.3px 'Open Sans', sans-serif;
  letter-spacing: -0.3px;
}
input::placeholder {
  color: #6c757d;
  opacity: 1;
}
.actions {
  display: flex;
  gap: 19px;
  padding-left: 251px;
}
button {
  height: 57px;
  padding: 0;
  border: 1px solid #1861ac;
  border-radius: 9px;
  background: #1b6ec2;
  color: #fff;
  font: 400 23.3px 'Open Sans', sans-serif;
  letter-spacing: -0.3px;
}
.save {
  width: 87px;
}
.reset {
  width: 96px;
}
.chart {
  display: flex;
  flex-direction: column;
  align-items: center;
  width: 936px;
  padding-top: 33px;
}
.chart-title {
  height: 22px;
  margin-bottom: 16px;
  color: #666;
  font: 700 18px/22px 'Liberation Sans', Arial, sans-serif;
}

/* token table */
.list {
  width: 1788px;
  height: 520px;
  margin-top: 60px;
  padding: 0 18px;
  background: #fff;
  box-shadow: 0 12px 24px rgba(0, 0, 0, 0.2), 0 0 30px rgba(0, 0, 0, 0.16);
  color: rgba(0, 0, 0, 0.87);
  font-family: 'Liberation Sans', Arial, sans-serif;
  font-size: 21px;
}
.tr {
  display: grid;
  grid-template-columns: 75px 133px 125px 602px 171px 181px 210px 1fr;
  align-items: center;
  height: 77px;
  padding-left: 24px;
  border-bottom: 1px solid #e0e0e0;
}
.tr.head {
  height: 84px;
}
.tr:nth-child(5) {
  border-bottom-color: transparent;
}
a {
  color: #00f;
}
.ops {
  display: flex;
  align-items: center;
  color: #000;
}
.ops svg {
  width: 27px;
  height: 27px;
}
.ops b {
  margin-left: 12px;
  font-weight: 400;
  letter-spacing: 1.5px;
}
.ops b.edit {
  width: 68px;
}
.pager {
  display: flex;
  justify-content: flex-end;
  gap: 30px;
  padding: 21px 27px 0 0;
}
.pager svg {
  width: 36px;
  height: 36px;
  fill: #bdbdbd;
}

/* scrollbar */
.scrollbar {
  display: flex;
  flex-direction: column;
  align-items: center;
  width: 24px;
  height: 1385px;
  padding: 10px 0;
  box-sizing: border-box;
  background: #f1f1f1;
}
.thumb {
  width: 21px;
  height: 856px;
  margin: 161px 0 auto;
  background: #a8a8a8;
}

/* taskbar */
.taskbar {
  display: flex;
  flex: none;
  height: 60px;
  background: #2b2c2c;
  color: #fff;
}
.start,
.taskview {
  display: flex;
  align-items: center;
  justify-content: center;
  width: 72px;
}
.taskview {
  width: 77px;
  padding-right: 4px;
  box-sizing: border-box;
}
.search {
  display: flex;
  align-items: center;
  width: 432px;
  height: 60px;
  box-sizing: border-box;
  border: 2px solid #bdbdbd;
  border-right-width: 0;
  background: #f1f1f1;
}
.glass {
  margin-left: 16px;
}
.stext {
  width: 252px;
  margin-left: 17px;
  padding-top: 3px;
  color: #2b2b2b;
  font-size: 21.8px;
}
.art {
  align-self: flex-start;
  margin-left: -1px;
}
.slot {
  display: flex;
  align-items: center;
  justify-content: center;
  width: 73px;
  height: 60px;
  margin-right: 2px;
  box-sizing: border-box;
}
.slot svg {
  width: 36px;
  height: 36px;
  overflow: visible;
}
.slot.vs,
.slot.run {
  background: linear-gradient(#76b9ed, #76b9ed) 6px 57px / 61px 3px no-repeat;
}
.slot:nth-of-type(4) {
  background:
    linear-gradient(#76b9ed, #76b9ed) 6px 57px / 47px 3px no-repeat,
    linear-gradient(#5f91b8, #5f91b8) 54px 57px / 13px 3px no-repeat;
}
.slot.chrome {
  padding-right: 1px;
  background:
    linear-gradient(#76b9ed, #76b9ed) 0 57px / 66px 3px no-repeat,
    linear-gradient(#5f91b8, #5f91b8) 68px 57px / 5px 3px no-repeat,
    linear-gradient(90deg, #595b5b 66px, #363737 66px, #363737 68px, #484a4a 68px);
}
.slot.docker {
  background: linear-gradient(#a8622c 57px, #ff7800 57px);
}

/* tray */
.tray {
  display: flex;
  align-items: center;
  margin-left: auto;
  font-size: 21.5px;
}
.weather {
  margin-left: 0;
}
.temp {
  width: 45px;
  margin: 3px 0 0 11px;
  letter-spacing: -0.6px;
}
.cond {
  width: 88px;
  margin: 3px 0 0 12px;
  letter-spacing: -0.3px;
}
.chev {
  margin-left: 24px;
}
.batt {
  margin: 6px 0 0 15px;
}
.wifi {
  margin: 2px 0 0 15px;
}
.vol {
  margin-left: 13px;
}
.eng {
  width: 35px;
  margin: 0 0 0 16px;
  font-size: 17.5px;
  letter-spacing: -0.4px;
}
.clock {
  display: flex;
  flex-direction: column;
  align-items: center;
  width: 90px;
  margin-left: 14px;
  font-size: 17.5px;
  line-height: 28px;
  letter-spacing: -0.3px;
}
.note {
  margin-left: 25px;
}
.peek {
  width: 2px;
  height: 60px;
  margin: 0 6px 0 29px;
  background: #7c7d7d;
}
</style>
